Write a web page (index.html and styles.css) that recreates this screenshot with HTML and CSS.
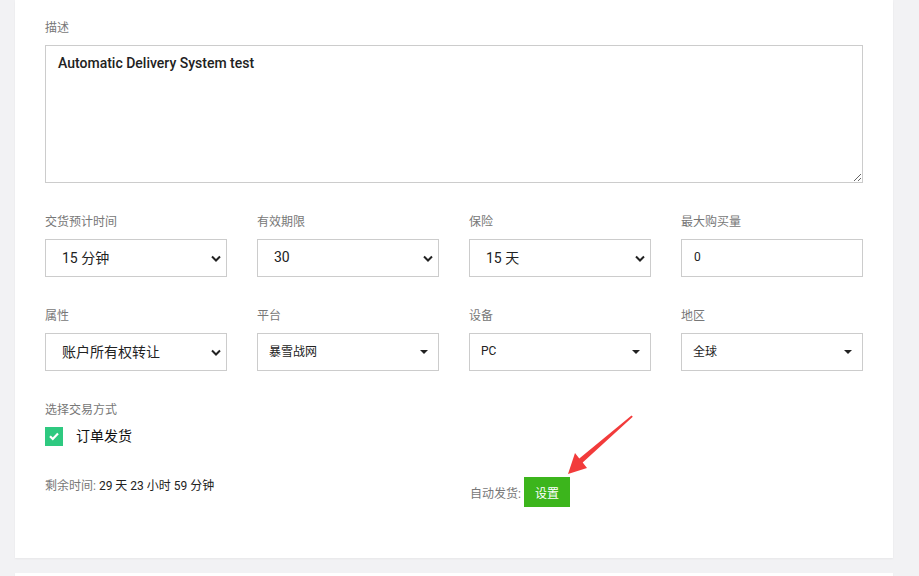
FILE: index.html
```html
<!DOCTYPE html>
<html>
<head>
	<title>商品设置</title>
	<link rel="stylesheet" href="styles.css">
</head>
<body>
	<div class="page">
		<section class="card">
			<!-- 描述 -->
			<div class="field">
				<label class="field-label">描述</label>
				<textarea class="desc" readonly>Automatic Delivery System test</textarea>
			</div>

			<!-- 选项 -->
			<div class="grid">
				<div class="field">
					<label class="field-label">交货预计时间</label>
					<div class="select native"><span>15 分钟</span><svg class="chev" viewBox="0 0 10 7"><path d="M1 1.5 L5 5.5 L9 1.5" /></svg></div>
				</div>
				<div class="field">
					<label class="field-label">有效期限</label>
					<div class="select native"><span>30</span><svg class="chev" viewBox="0 0 10 7"><path d="M1 1.5 L5 5.5 L9 1.5" /></svg></div>
				</div>
				<div class="field">
					<label class="field-label">保险</label>
					<div class="select native"><span>15 天</span><svg class="chev" viewBox="0 0 10 7"><path d="M1 1.5 L5 5.5 L9 1.5" /></svg></div>
				</div>
				<div class="field">
					<label class="field-label">最大购买量</label>
					<div class="select number"><span>0</span></div>
				</div>

				<div class="field">
					<label class="field-label">属性</label>
					<div class="select native"><span>账户所有权转让</span><svg class="chev" viewBox="0 0 10 7"><path d="M1 1.5 L5 5.5 L9 1.5" /></svg></div>
				</div>
				<div class="field">
					<label class="field-label">平台</label>
					<div class="select drop"><span>暴雪战网</span><i class="caret"></i></div>
				</div>
				<div class="field">
					<label class="field-label">设备</label>
					<div class="select drop"><span>PC</span><i class="caret"></i></div>
				</div>
				<div class="field">
					<label class="field-label">地区</label>
					<div class="select drop"><span>全球</span><i class="caret"></i></div>
				</div>
			</div>

			<!-- 交易方式 -->
			<div class="field trade">
				<label class="field-label">选择交易方式</label>
				<div class="check-row">
					<span class="check"><svg viewBox="0 0 18 18"><path d="M5 9.2 L7.8 12 L13 6.6" /></svg></span>
					<span class="check-text">订单发货</span>
				</div>
			</div>

			<div class="grid bottom">
				<div class="remain"><span class="muted">剩余时间:</span> 29 天 23 小时 59 分钟</div>
				<div class="auto">
					<span class="muted">自动发货:</span>
					<button class="btn-set">设置</button>
				</div>
			</div>
		</section>

		<section class="card next"></section>
	</div>

	<svg class="arrow" viewBox="0 0 80 70" width="80" height="70">
		<polygon points="8,64 15,43 19.3,48.6 71.5,5.5 72.8,6.8 22.7,52.4 27,58" />
	</svg>
</body>
</html>
```

FILE: styles.css
```css
/* page */
body {
  margin: 0;
  background-color: #f2f2f4;
  font-family: Roboto, "Noto Sans CJK SC", sans-serif;
  color: #222;
  position: relative;
  height: 576px;
  overflow: hidden;
}

.page {
  padding-left: 15px;
  width: 878px;
}

.card {
  background-color: #fff;
  padding: 18px 30px 51px;
  margin-bottom: 15px;
  box-shadow: 0 1px 2px rgba(0, 0, 0, 0.05);
}

.card.next {
  height: 200px;
  padding: 0;
}

/* fields */
.field {
  margin-bottom: 29px;
}

.field-label {
  display: block;
  font-size: 12px;
  line-height: 18px;
  padding-top: 1px;
  color: #777;
  margin-bottom: 8px;
}

.desc {
  display: block;
  width: 100%;
  height: 138px;
  box-sizing: border-box;
  border: 1px solid #ccc;
  padding: 9px 12px;
  font-family: Roboto, "Noto Sans CJK SC", sans-serif;
  font-size: 14px;
  font-weight: 500;
  color: #222;
  resize: vertical;
  outline: none;
}

.grid {
  display: grid;
  grid-template-columns: repeat(4, 182px);
  column-gap: 30px;
}

/* select boxes */
.select {
  height: 38px;
  box-sizing: border-box;
  border: 1px solid #ccc;
  display: flex;
  align-items: center;
  justify-content: space-between;
  color: #222;
}

.select span {
  padding-bottom: 3px;
}

.select.native {
  padding: 0 5px 0 16px;
  font-size: 14px;
}

.chev {
  width: 10px;
  height: 7px;
  fill: none;
  stroke: #222;
  stroke-width: 2;
}

.select.drop {
  padding: 0 10px 0 11px;
  font-size: 12px;
}

.caret {
  width: 0;
  height: 0;
  border-left: 4px solid transparent;
  border-right: 4px solid transparent;
  border-top: 4px solid #222;
}

.select.number {
  padding: 0 12px;
  font-size: 12px;
}

/* trade type */
.trade {
  margin-bottom: 32px;
}

.check-row {
  display: flex;
  align-items: center;
  height: 18px;
}

.check {
  width: 18px;
  height: 19px;
  background-color: #2ec980;
  display: flex;
  align-items: center;
  justify-content: center;
  margin-right: 13px;
}

.check svg {
  width: 18px;
  height: 18px;
  fill: none;
  stroke: #fff;
  stroke-width: 2.2;
}

.check-text {
  font-size: 14px;
  color: #111;
  padding-bottom: 3px;
}

/* bottom row */
.bottom {
  align-items: start;
}

.remain {
  grid-column: span 2;
  font-size: 12px;
  line-height: 18px;
  color: #222;
}

.muted {
  color: #777;
}

.auto {
  grid-column: span 2;
  display: flex;
  align-items: center;
  font-size: 12px;
  padding-left: 1px;
}

.btn-set {
  margin-left: 3px;
  width: 46px;
  height: 30px;
  border: none;
  background-color: #3cb51c;
  color: #fff;
  font-family: Roboto, "Noto Sans CJK SC", sans-serif;
  font-size: 12px;
  padding: 0;
}

/* annotation arrow */
.arrow {
  position: absolute;
  left: 560px;
  top: 410px;
  fill: #f23b3b;
}
```
